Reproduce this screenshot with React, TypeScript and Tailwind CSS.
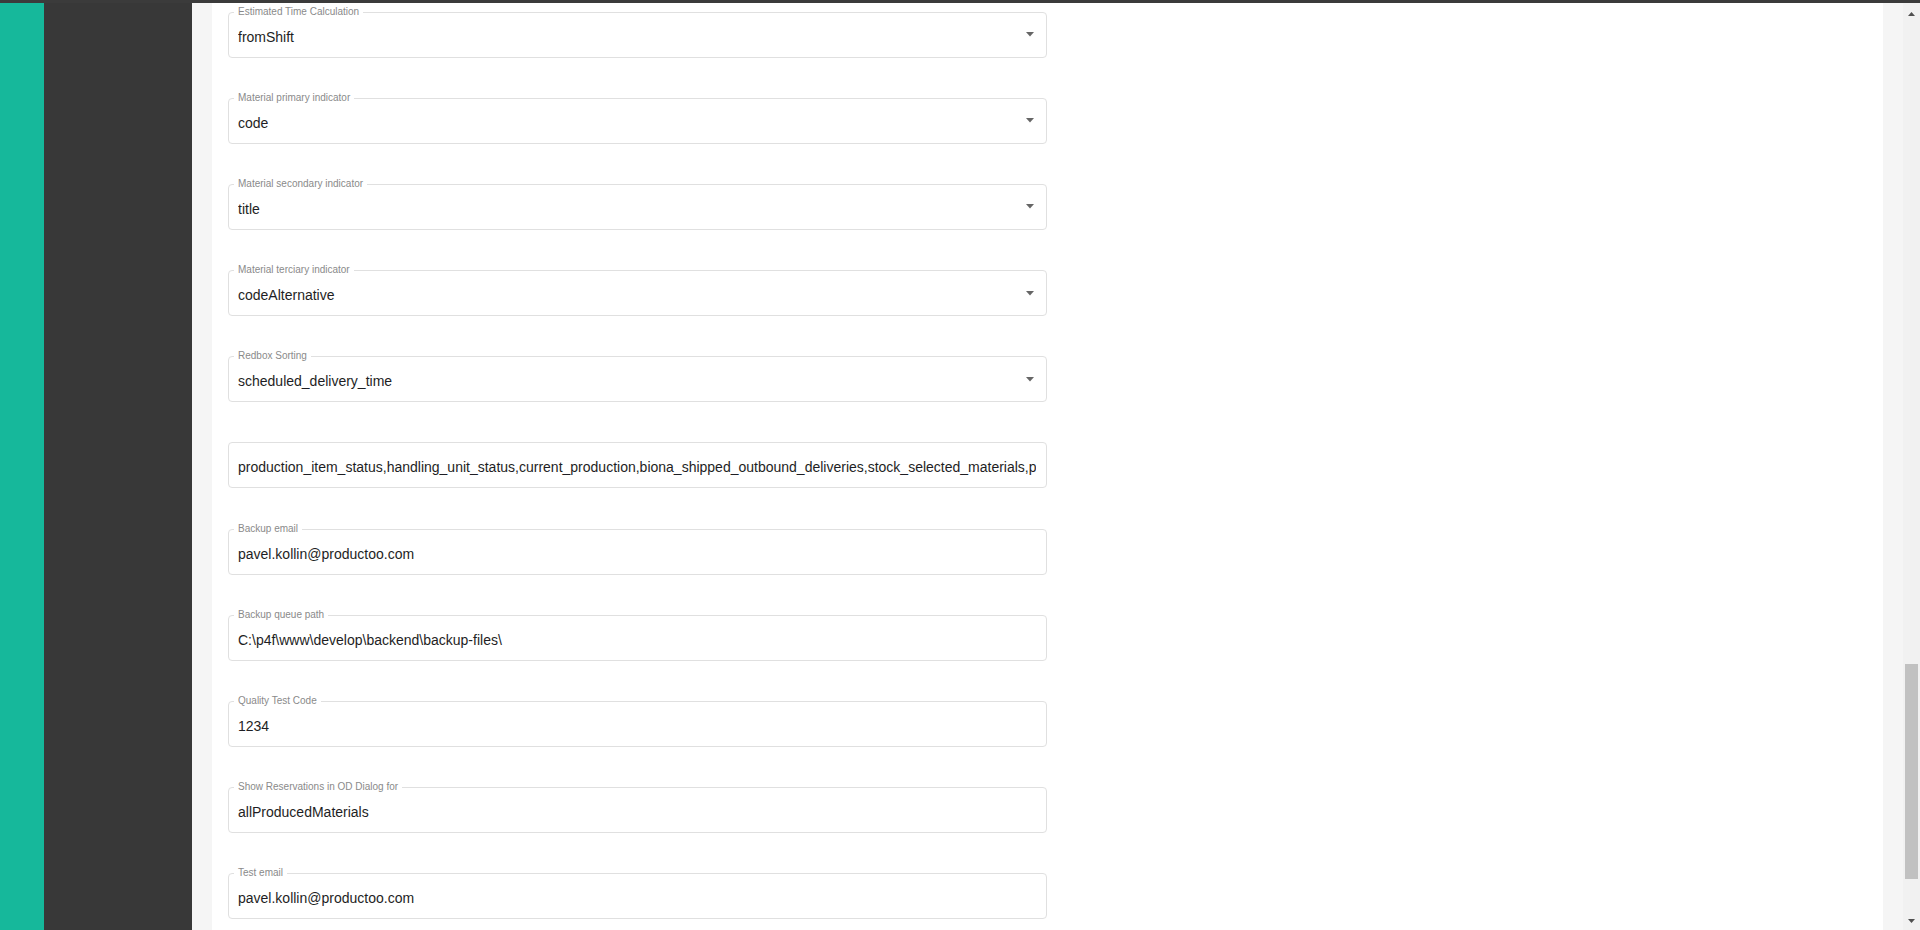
import React from "react";

type Field = { label?: string; value: string; select?: boolean };

const FIELDS: Field[] = [
  { label: "Estimated Time Calculation", value: "fromShift", select: true },
  { label: "Material primary indicator", value: "code", select: true },
  { label: "Material secondary indicator", value: "title", select: true },
  { label: "Material terciary indicator", value: "codeAlternative", select: true },
  { label: "Redbox Sorting", value: "scheduled_delivery_time", select: true },
  {
    value:
      "production_item_status,handling_unit_status,current_production,biona_shipped_outbound_deliveries,stock_selected_materials,produced_materials,reserved_stock",
  },
  { label: "Backup email", value: "pavel.kollin@productoo.com" },
  { label: "Backup queue path", value: "C:\\p4f\\www\\develop\\backend\\backup-files\\" },
  { label: "Quality Test Code", value: "1234" },
  { label: "Show Reservations in OD Dialog for", value: "allProducedMaterials" },
  { label: "Test email", value: "pavel.kollin@productoo.com" },
];

function SettingField({ label, value, select }: Field) {
  return (
    <div className="relative flex h-[46px] w-[819px] items-center rounded border border-[#e0e0e0] bg-white pt-[4px] pl-[9px] pr-[10px]">
      {label && (
        <span className="absolute -top-[7px] left-[5px] bg-white px-[4px] text-[10px] leading-[12px] text-[#8a8a8a]">
          {label}
        </span>
      )}
      <div className="flex-1 overflow-hidden whitespace-nowrap text-[14px] leading-[18px] text-[#1e1e24]">
        {value}
      </div>
      {select && (
        <svg width="8" height="5" viewBox="0 0 8 5" className="ml-3 mr-[2px] -mt-[4px] shrink-0">
          <polygon points="0,0 8,0 4,4.5" fill="#666" />
        </svg>
      )}
    </div>
  );
}

export default function App() {
  return (
    <div
      className="flex h-[930px] w-[1920px] flex-col overflow-hidden bg-white"
      style={{ fontFamily: '"Liberation Sans", Arial, sans-serif' }}
    >
      <div className="h-[3px] w-full shrink-0 bg-[#3b3b3b]" />
      <div className="flex min-h-0 flex-1">
        <aside className="w-[44px] shrink-0 bg-[#16b89b]" />
        <nav className="w-[148px] shrink-0 bg-[#383838]" />
        <main className="flex min-w-0 flex-1 bg-[#f5f5f5] px-[20px]">
          <section className="flex flex-1 flex-col gap-[40.2px] bg-white pt-[8.5px] pl-[16px]">
            {FIELDS.map((f, i) => (
              <SettingField key={i} {...f} />
            ))}
          </section>
        </main>
        <div className="flex w-[17px] shrink-0 flex-col items-center bg-[#f1f1f1]">
          <svg width="7" height="4" viewBox="0 0 7 4" className="mt-[9px]">
            <polygon points="3.5,0 7,4 0,4" fill="#505050" />
          </svg>
          <div className="mt-[648px] h-[215px] w-[13px] bg-[#c1c1c1]" />
          <svg width="7" height="4" viewBox="0 0 7 4" className="mt-[40px]">
            <polygon points="0,0 7,0 3.5,4" fill="#505050" />
          </svg>
        </div>
      </div>
    </div>
  );
}
